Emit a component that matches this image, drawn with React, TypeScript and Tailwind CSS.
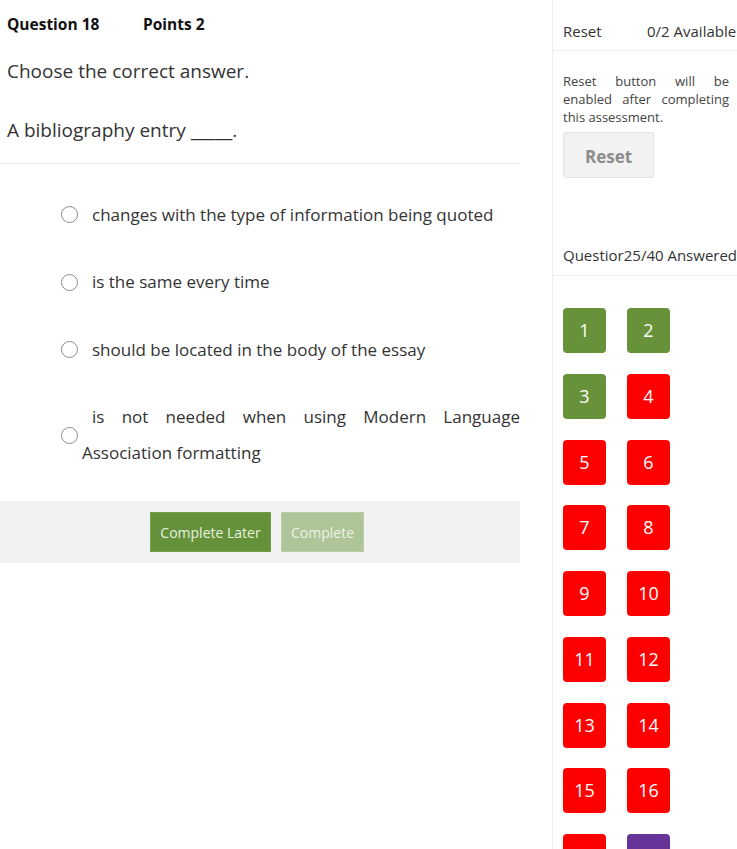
import React from "react";

const options = [
  "changes with the type of information being quoted",
  "is the same every time",
  "should be located in the body of the essay",
  "is not needed when using Modern Language Association formatting",
];

const tiles: { n: number; c: string }[] = [
  { n: 1, c: "bg-[#67923a]" },
  { n: 2, c: "bg-[#67923a]" },
  { n: 3, c: "bg-[#67923a]" },
  { n: 4, c: "bg-[#ff0000]" },
  { n: 5, c: "bg-[#ff0000]" },
  { n: 6, c: "bg-[#ff0000]" },
  { n: 7, c: "bg-[#ff0000]" },
  { n: 8, c: "bg-[#ff0000]" },
  { n: 9, c: "bg-[#ff0000]" },
  { n: 10, c: "bg-[#ff0000]" },
  { n: 11, c: "bg-[#ff0000]" },
  { n: 12, c: "bg-[#ff0000]" },
  { n: 13, c: "bg-[#ff0000]" },
  { n: 14, c: "bg-[#ff0000]" },
  { n: 15, c: "bg-[#ff0000]" },
  { n: 16, c: "bg-[#ff0000]" },
  { n: 17, c: "bg-[#ff0000]" },
  { n: 18, c: "bg-[#663399]" },
];

export default function App() {
  return (
    <div
      className="flex w-[737px] h-[849px] overflow-hidden bg-white text-[#333]"
      style={{ fontFamily: '"Open Sans", "Noto Sans", sans-serif' }}
    >
      {/* Left column */}
      <div className="w-[520px] shrink-0 flex flex-col">
        <div className="flex px-[7px] pt-[14px] text-[15.5px] leading-[20px] font-bold text-[#111]">
          <span className="w-[136px]">Question 18</span>
          <span>Points 2</span>
        </div>
        <div className="px-[7px] mt-[23px] text-[19px] leading-[28px]">Choose the correct answer.</div>
        <div className="px-[7px] mt-[31px] text-[19px] leading-[28px] pb-[19px] border-b border-[#ececec]">
          A bibliography entry _____.
        </div>
        <div className="mt-[17px] flex flex-col">
          {options.map((o) => (
            <div key={o} className="flex items-center py-[15.75px]">
              <span className="ml-[61px] w-[17px] h-[17px] shrink-0 rounded-full border-[1.5px] border-[#8a8a8a] bg-white" />
              <span className="ml-[4px] w-[438px] indent-[10px] text-justify text-[17px] leading-[36px] text-[#333]">
                {o}
              </span>
            </div>
          ))}
        </div>
        <div className="mt-[14px] h-[62px] bg-[#f2f2f2] flex items-center justify-center gap-[10px] pr-[6px]">
          <button className="w-[121px] h-[40px] bg-[#65913a] border border-[#75a04a] text-[#e9f1e0] text-[14px]">
            Complete Later
          </button>
          <button className="w-[83px] h-[40px] bg-[#adc597] border border-[#bcd0a8] text-[#eef3e8] text-[14px]">
            Complete
          </button>
        </div>
      </div>

      {/* Right column */}
      <div className="ml-[32px] flex-1 border-l border-[#f0f0f0] flex flex-col min-w-0">
        <div className="pl-[10px] pt-[20px] pb-[8px] flex text-[15px] leading-[22px] whitespace-nowrap border-b border-[#f0f0f0]">
          <span className="w-[84px] shrink-0">Reset</span>
          <span>0/2 Available</span>
        </div>
        <div className="pl-[10px] pr-[8px] mt-[21px] text-[13px] leading-[18px] text-justify text-[#444]">
          Reset button will be enabled after completing this assessment.
        </div>
        <div className="pl-[10px] mt-[6px]">
          <button className="w-[91px] h-[46px] pt-[3px] bg-[#f2f2f2] border border-[#e2e2e2] rounded-[2px] text-[17px] font-bold text-[#8c8c8c]">
            Reset
          </button>
        </div>
        <div className="pl-[10px] mt-[66px] pb-[9px] text-[15px] leading-[22px] whitespace-nowrap border-b border-[#f0f0f0]">
          Questior25/40 Answered
        </div>
        <div className="pl-[10px] mt-[32px] grid grid-cols-[43px_43px] gap-x-[21px] gap-y-[20.75px]">
          {tiles.map((t) => (
            <div
              key={t.n}
              className={`${t.c} h-[45px] rounded-[4px] flex items-center justify-center text-white text-[18px]`}
            >
              {t.n}
            </div>
          ))}
        </div>
      </div>
    </div>
  );
}
